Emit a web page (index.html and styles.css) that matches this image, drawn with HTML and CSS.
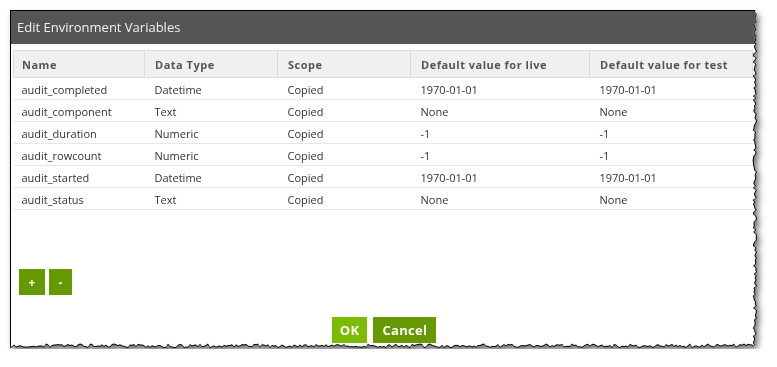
FILE: index.html
```html
<!DOCTYPE html>
<html lang="en">
<head>
  <meta charset="UTF-8" />
  <title>Edit Environment Variables</title>
  <link rel="stylesheet" href="styles.css">
</head>
<body>

  <div class="shadow">
    <div class="edge" id="edge">
      <div class="dialog" id="dialog">
        <div class="title">Edit Environment Variables</div>

        <div class="content">
          <table class="vars">
            <colgroup>
              <col style="width:131px">
              <col style="width:133px">
              <col style="width:133px">
              <col style="width:179px">
              <col>
            </colgroup>
            <thead>
              <tr>
                <th>Name</th>
                <th>Data Type</th>
                <th>Scope</th>
                <th>Default value for live</th>
                <th>Default value for test</th>
              </tr>
            </thead>
            <tbody>
              <tr><td>audit_completed</td><td>Datetime</td><td>Copied</td><td>1970-01-01</td><td>1970-01-01</td></tr>
              <tr><td>audit_component</td><td>Text</td><td>Copied</td><td>None</td><td>None</td></tr>
              <tr><td>audit_duration</td><td>Numeric</td><td>Copied</td><td>-1</td><td>-1</td></tr>
              <tr><td>audit_rowcount</td><td>Numeric</td><td>Copied</td><td>-1</td><td>-1</td></tr>
              <tr><td>audit_started</td><td>Datetime</td><td>Copied</td><td>1970-01-01</td><td>1970-01-01</td></tr>
              <tr><td>audit_status</td><td>Text</td><td>Copied</td><td>None</td><td>None</td></tr>
            </tbody>
          </table>

          <div class="row-tools">
            <button class="btn small">+</button>
            <button class="btn small minus">-</button>
          </div>
        </div>

        <div class="actions">
          <button class="btn ok">OK</button>
          <button class="btn">Cancel</button>
        </div>
      </div>
    </div>
  </div>

  <script>
    // torn paper edge on the right and bottom, like the screenshot tool does
    const edge = document.getElementById('edge');
    const dialog = document.getElementById('dialog');
    const W = edge.offsetWidth;
    const H = edge.offsetHeight;

    let seed = 7;
    function rand() {
      seed = (seed * 9301 + 49297) % 233280;
      return seed / 233280;
    }

    const right = [];
    for (let y = 0; y <= H; y += 2) right.push([W - 1 - rand() * 3.5, y]);
    const bottom = [];
    for (let x = W; x >= 0; x -= 2) bottom.push([x, H - 1 - rand() * 3.5]);

    function poly(inset) {
      const pts = [[inset, inset]];
      right.forEach(p => pts.push([p[0] - inset, Math.max(inset, Math.min(p[1], H - 4))]));
      bottom.forEach(p => pts.push([Math.max(inset, p[0] - 4 * (p[0] > W - 4)), p[1] - inset]));
      pts.push([inset, H - 3 - inset]);
      return 'polygon(' + pts.map(p => p[0].toFixed(1) + 'px ' + p[1].toFixed(1) + 'px').join(',') + ')';
    }

    edge.style.clipPath = poly(0);
    dialog.style.clipPath = poly(1);
  </script>
</body>
</html>
```

FILE: styles.css
```css
body {
  margin: 0;
  background: #fff;
  font-family: 'Open Sans', 'DejaVu Sans', sans-serif;
  color: #333;
}

.shadow {
  padding: 10px 0 0 10px;
  width: 748px;
  filter: drop-shadow(3px 4px 3px rgba(0,0,0,0.55));
}

.edge {
  background: #000;
  width: 748px;
  height: 339px;
}

.dialog {
  background: #fff;
  height: 339px;
  display: flex;
  flex-direction: column;
}

.title {
  background: #555;
  color: #f2f2f2;
  font-size: 13px;
  height: 34px;
  line-height: 34px;
  padding-left: 7px;
}

.content {
  padding: 6px 4px 0 3px;
}

.vars {
  width: 740px;
  border-collapse: collapse;
  table-layout: fixed;
  font-size: 11px;
}

.vars th {
  background: #f0f0f0;
  border: 1px solid #dcdcdc;
  color: #555;
  font-weight: bold;
  letter-spacing: 0.5px;
  text-align: left;
  height: 26px;
  padding: 0 9px 0 10px;
}

.vars td {
  height: 20px;
  padding: 1px 9px 0 10px;
  border-bottom: 1px solid #e6e6e6;
  white-space: nowrap;
}

.vars th:first-child,
.vars td:first-child {
  padding-left: 8px;
}

.row-tools {
  display: flex;
  gap: 4px;
  margin-top: 59px;
  padding-left: 6px;
}

.btn {
  background: #669900;
  color: #fff;
  border: none;
  font-family: 'Open Sans', 'DejaVu Sans', sans-serif;
  font-size: 13px;
  font-weight: bold;
  letter-spacing: 0.3px;
  height: 26px;
  padding: 0 9px;
  cursor: pointer;
}

.btn.small {
  width: 26px;
  padding: 0;
  font-size: 12px;
}

.btn.small.minus {
  width: 23px;
}

.btn.ok {
  background: #7cbc00;
  padding: 0 8px;
}

.actions {
  display: flex;
  justify-content: center;
  gap: 6px;
  margin-top: 22px;
}
```
